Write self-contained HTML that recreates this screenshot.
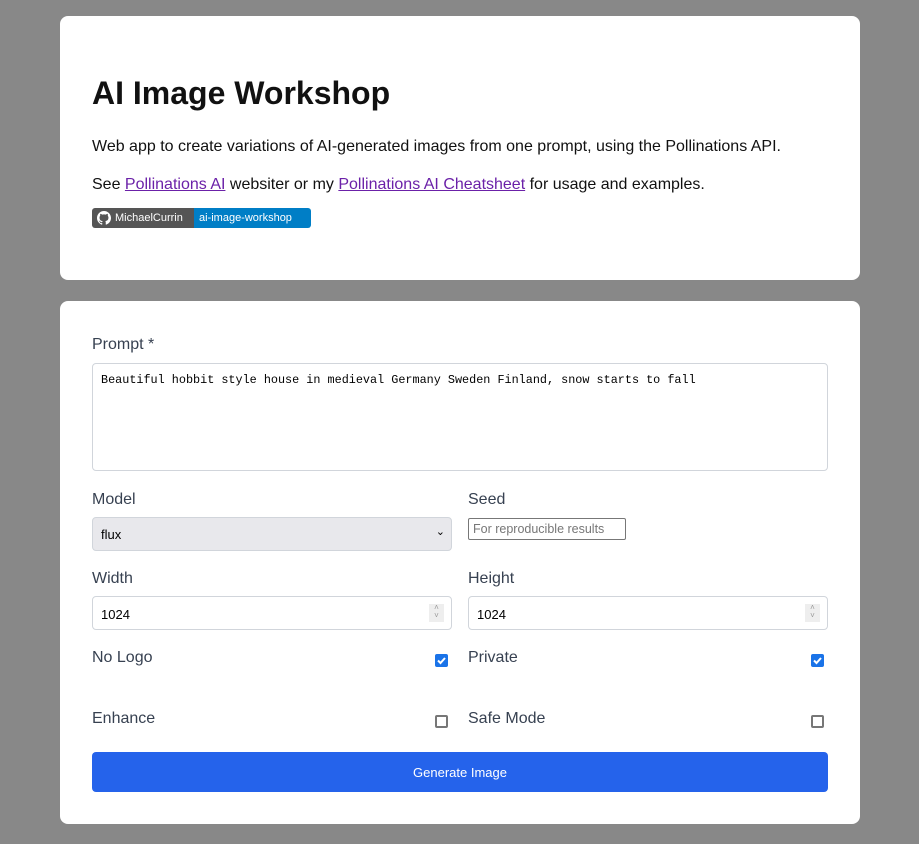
<!DOCTYPE html>
<html><head><style>
body{margin:0;background:#888;font-family:"Liberation Sans",sans-serif;width:919px;height:844px;position:relative;overflow:hidden}
.card{position:absolute;left:60px;width:800px;background:#fff;border-radius:8px}
.abs{position:absolute}
h1{position:absolute;left:32px;top:57px;margin:0;font-size:32px;line-height:40px;font-weight:bold;color:#111}
p{position:absolute;left:32px;margin:0;font-size:16px;line-height:20px;color:#111}
a{color:#6b21a8;text-decoration:underline}
.lbl{position:absolute;font-size:16px;line-height:20px;color:#374151}
.inp{position:absolute;border:1px solid #d1d5db;border-radius:4px;background:#fff;box-sizing:border-box;font-size:13px;color:#000}
.cb{position:absolute;width:13px;height:13px;box-sizing:border-box;border-radius:2px}
.on{background:#1a73e8}
.off{border:2px solid #777;background:#fff}
.spin{position:absolute;right:7px;top:7px;width:15px;height:18px;background:#eee;color:#999;font-size:8px;line-height:8px;text-align:center}
</style></head><body>
<div class="card" style="top:16px;height:264px">
<h1>AI Image Workshop</h1>
<p style="top:121px">Web app to create variations of AI-generated images from one prompt, using the Pollinations API.</p>
<p style="top:159px">See <a>Pollinations AI</a> websiter or my <a>Pollinations AI Cheatsheet</a> for usage and examples.</p>
<div class="abs" style="left:32px;top:192px;height:20px;width:219px;border-radius:3px;overflow:hidden;font-size:11px;color:#fff;line-height:20px;display:flex">
<div style="background:#555;width:102px;padding-left:5px;box-sizing:border-box;display:flex;align-items:center"><svg width="14" height="14" viewBox="0 0 16 16"><path fill="#fff" d="M8 0C3.6 0 0 3.6 0 8c0 3.5 2.3 6.5 5.5 7.6.4.1.5-.2.5-.4v-1.4c-2.2.5-2.7-1-2.7-1-.4-.9-.9-1.2-.9-1.2-.7-.5.1-.5.1-.5.8.1 1.2.8 1.2.8.7 1.3 1.9.9 2.3.7.1-.5.3-.9.5-1.1-1.8-.2-3.6-.9-3.6-4 0-.9.3-1.6.8-2.1-.1-.2-.4-1 .1-2.1 0 0 .7-.2 2.2.8.6-.2 1.3-.3 2-.3s1.4.1 2 .3c1.5-1 2.2-.8 2.2-.8.4 1.1.2 1.9.1 2.1.5.6.8 1.3.8 2.1 0 3.1-1.9 3.7-3.6 3.9.3.3.5.8.5 1.5v2.2c0 .2.1.5.6.4C13.7 14.5 16 11.5 16 8c0-4.4-3.6-8-8-8z"/></svg><span style="margin-left:4px">MichaelCurrin</span></div>
<div style="background:#007ec6;flex:1;padding-left:5px">ai-image-workshop</div></div>
</div>
<div class="card" style="top:301px;height:523px">
<div class="lbl" style="left:32px;top:34px">Prompt *</div>
<div class="inp" style="left:32px;top:62px;width:736px;height:108px;font-family:'Liberation Mono',monospace;font-size:11.8px;padding:9px 8px">Beautiful hobbit style house in medieval Germany Sweden Finland, snow starts to fall</div>
<div class="lbl" style="left:32px;top:189px">Model</div>
<div class="inp" style="left:32px;top:216px;width:360px;height:34px;background:#e8e8ec;padding:9px 8px">flux<span style="position:absolute;right:6px;top:7px;font-size:11px">&#8964;</span></div>
<div class="lbl" style="left:408px;top:189px">Seed</div>
<div class="inp" style="left:408px;top:217px;width:158px;height:22px;border:1px solid #777;border-radius:2px;color:#777;font-size:12.5px;padding:3px 4px">For reproducible results</div>
<div class="lbl" style="left:32px;top:268px">Width</div>
<div class="inp" style="left:32px;top:295px;width:360px;height:34px;padding:10px 8px">1024<div class="spin">&#708;<br>&#709;</div></div>
<div class="lbl" style="left:408px;top:268px">Height</div>
<div class="inp" style="left:408px;top:295px;width:360px;height:34px;padding:10px 8px">1024<div class="spin">&#708;<br>&#709;</div></div>
<div class="lbl" style="left:32px;top:347px">No Logo</div>
<div class="cb on" style="left:375px;top:353px"><svg width="13" height="13"><path d="M3 6.5l2.5 2.5 4.5-5" stroke="#fff" stroke-width="2" fill="none"/></svg></div>
<div class="lbl" style="left:408px;top:347px">Private</div>
<div class="cb on" style="left:751px;top:353px"><svg width="13" height="13"><path d="M3 6.5l2.5 2.5 4.5-5" stroke="#fff" stroke-width="2" fill="none"/></svg></div>
<div class="lbl" style="left:32px;top:408px">Enhance</div>
<div class="cb off" style="left:375px;top:414px"></div>
<div class="lbl" style="left:408px;top:408px">Safe Mode</div>
<div class="cb off" style="left:751px;top:414px"></div>
<div class="abs" style="left:32px;top:451px;width:736px;height:40px;background:#2563eb;border-radius:4px;color:#fff;font-size:13px;text-align:center;line-height:42px">Generate Image</div>
</div>
</body></html>
